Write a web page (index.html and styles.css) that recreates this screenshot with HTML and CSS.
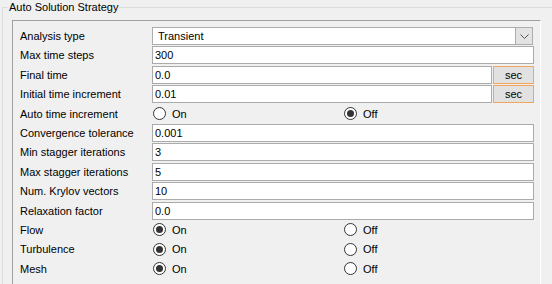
FILE: index.html
```html
<!DOCTYPE html>
<html>
<head>
<meta charset="utf-8">
<link rel="stylesheet" href="styles.css">
</head>
<body>
<fieldset class="group">
  <legend class="group-title">Auto Solution Strategy</legend>
  <div class="panel">
    <div class="form">
      <span class="lbl">Analysis type</span>
      <div class="combo">
        <span class="combo-text">Transient</span>
        <span class="combo-btn"><svg width="9" height="5" viewBox="0 0 9 5"><path d="M0.5 0.5 L4.5 4.5 L8.5 0.5" fill="none" stroke="#555" stroke-width="1"/></svg></span>
      </div>

      <span class="lbl">Max time steps</span>
      <div class="field">300</div>

      <span class="lbl">Final time</span>
      <div class="with-unit"><div class="field">0.0</div><button class="unit-btn">sec</button></div>

      <span class="lbl">Initial time increment</span>
      <div class="with-unit"><div class="field">0.01</div><button class="unit-btn">sec</button></div>

      <span class="lbl">Auto time increment</span>
      <div class="radios">
        <span class="radio"><span class="dot"></span>On</span>
        <span class="radio"><span class="dot on"></span>Off</span>
      </div>

      <span class="lbl">Convergence tolerance</span>
      <div class="field">0.001</div>

      <span class="lbl">Min stagger iterations</span>
      <div class="field">3</div>

      <span class="lbl">Max stagger iterations</span>
      <div class="field">5</div>

      <span class="lbl">Num. Krylov vectors</span>
      <div class="field">10</div>

      <span class="lbl">Relaxation factor</span>
      <div class="field">0.0</div>

      <span class="lbl">Flow</span>
      <div class="radios">
        <span class="radio"><span class="dot on"></span>On</span>
        <span class="radio"><span class="dot"></span>Off</span>
      </div>

      <span class="lbl">Turbulence</span>
      <div class="radios">
        <span class="radio"><span class="dot on"></span>On</span>
        <span class="radio"><span class="dot"></span>Off</span>
      </div>

      <span class="lbl">Mesh</span>
      <div class="radios">
        <span class="radio"><span class="dot on"></span>On</span>
        <span class="radio"><span class="dot"></span>Off</span>
      </div>
    </div>
  </div>
</fieldset>
</body>
</html>
```
FILE: styles.css
```css
html, body {
  margin: 0;
  height: 100%;
  overflow: hidden;
  background: #f0f0f0;
}
body {
  font: 11px "Liberation Sans", Arial, sans-serif;
  color: #000;
}
.group {
  margin: 0 0 0 2px;
  padding: 5px 0 0 9px;
  border: 1px solid #dcdcdc;
  border-right: 0;
  border-bottom: 0;
  min-width: 0;
}
.group-title {
  padding: 0 1px;
  margin-left: -4px;
  line-height: 15px;
}
.panel {
  width: 514px;
  padding: 6px 6px 20px 7px;
  border-top: 1px solid #a0a0a0;
  border-left: 1px solid #a0a0a0;
  border-right: 1px solid #ffffff;
  background: #f0f0f0;
}
.form {
  display: grid;
  grid-template-columns: 132px 382px;
  grid-auto-rows: 18px;
  row-gap: 1.4px;
  align-items: center;
}
.lbl {
  white-space: nowrap;
}
.field {
  height: 18px;
  box-sizing: border-box;
  border: 1px solid #ababab;
  background: #fff;
  padding: 0 2px;
  display: flex;
  align-items: center;
}
.combo {
  display: flex;
  height: 18px;
  box-sizing: border-box;
  border: 1px solid #adadad;
  background: #fff;
  margin-right: 1px;
}
.combo-text {
  flex: 1;
  padding-left: 5px;
  line-height: 16px;
}
.combo-btn {
  width: 16px;
  background: #e3e3e3;
  border-left: 1px solid #adadad;
  display: flex;
  align-items: center;
  justify-content: center;
}
.with-unit {
  display: flex;
  gap: 1px;
  height: 18px;
}
.with-unit .field {
  flex: 1;
}
.unit-btn {
  width: 41px;
  height: 18px;
  box-sizing: border-box;
  border: 1px solid #f2a55e;
  background: #e1e1e1;
  padding: 0;
  margin: 0;
  font: inherit;
  color: #000;
  text-align: center;
  line-height: 16px;
}
.radios {
  display: grid;
  grid-template-columns: 191px auto;
  align-items: center;
}
.radio {
  display: flex;
  align-items: center;
  gap: 6px;
  padding-left: 1px;
}
.dot {
  width: 13px;
  height: 13px;
  box-sizing: border-box;
  border: 1px solid #333;
  border-radius: 50%;
  background: #fff;
  display: flex;
  align-items: center;
  justify-content: center;
}
.dot.on::after {
  content: "";
  width: 7px;
  height: 7px;
  border-radius: 50%;
  background: #333;
}
```
